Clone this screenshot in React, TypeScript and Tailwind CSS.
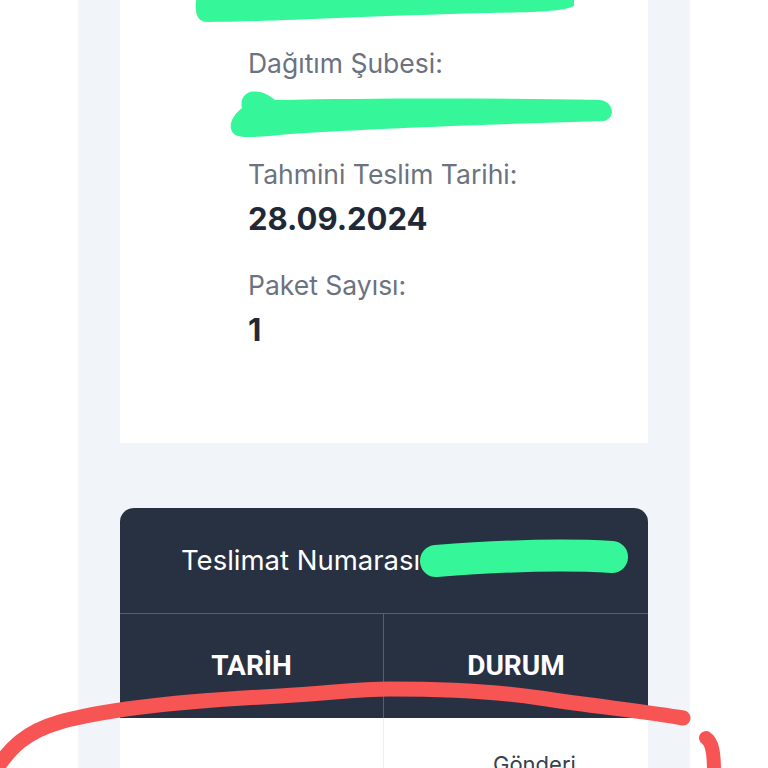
export default function App() {
  return (
    <div className="relative h-[768px] w-[768px] overflow-hidden bg-white font-['Inter',sans-serif]">
      <div className="ml-[78px] h-full w-[612px] bg-[#f1f4f8] px-[42px]">
        {/* gönderi bilgileri */}
        <div className="flex flex-col gap-[28px] bg-white pb-[93px] pl-[128px] pt-[45px]">
          <div className="flex flex-col gap-[7px]">
            <div className="text-[26.5px] leading-[36px] text-[#6b7280]">Dağıtım Şubesi:</div>
            <div className="h-[40px]" />
          </div>
          <div className="flex flex-col gap-[7px]">
            <div className="text-[26.5px] leading-[36px] text-[#6b7280]">Tahmini Teslim Tarihi:</div>
            <div className="text-[31px] font-bold leading-[40px] text-[#1f2937]">28.09.2024</div>
          </div>
          <div className="flex flex-col gap-[7px]">
            <div className="text-[26.5px] leading-[36px] text-[#6b7280]">Paket Sayısı:</div>
            <div className="text-[31px] font-bold leading-[40px] text-[#1f2937]">1</div>
          </div>
        </div>

        {/* hareketler tablosu */}
        <div className="mt-[65px] overflow-hidden rounded-t-[14px] bg-[#273142]">
          <div className="flex h-[106px] items-center border-b border-[#566071] pl-[61px] text-[27.5px] text-white">
            Teslimat Numarası:
          </div>
          <div className="grid h-[104px] grid-cols-2 font-['Roboto',sans-serif] text-[28px] font-bold text-white">
            <div className="flex items-center justify-center border-r border-[#566071]">TARİH</div>
            <div className="flex items-center justify-center">DURUM</div>
          </div>
        </div>
        <div className="grid h-[60px] grid-cols-2 bg-white">
          <div className="border-r border-[#eceef1]" />
          <div className="pl-[109px] pt-[31px] text-[22px] leading-[30px] text-[#374151]">Gönderi</div>
        </div>
      </div>

      {/* karalamalar */}
      <svg className="pointer-events-none absolute inset-0" width="768" height="768" viewBox="0 0 768 768">
        <path
          d="M197 -6 L574 -6 L574 6 C560 13 520 12 450 14 C350 17 260 22 208 22 C196 22 194 12 197 -6 Z"
          fill="#35f799"
        />
        <path
          d="M250 92 C262 90 270 96 275 100 C380 98 500 98 600 100 C614 102 616 118 604 121 C500 124 380 128 290 134 C260 137 240 139 234 134 C226 126 234 114 242 108 C240 100 244 94 250 92 Z"
          fill="#35f799"
        />
        <path d="M436 561 C500 556 560 554 612 557" stroke="#35f799" strokeWidth="32" strokeLinecap="round" fill="none" />
        <path
          d="M-6 772 C10 748 25 732 60 722 C110 708 200 700 280 696 C330 693 360 689 390 689 C450 689 500 692 540 698 C600 707 650 712 683 718"
          stroke="#f75454"
          strokeWidth="15"
          strokeLinecap="round"
          fill="none"
        />
        <path d="M706 738 C712 742 714 752 714 772" stroke="#f75454" strokeWidth="14" strokeLinecap="round" fill="none" />
      </svg>
    </div>
  );
}
